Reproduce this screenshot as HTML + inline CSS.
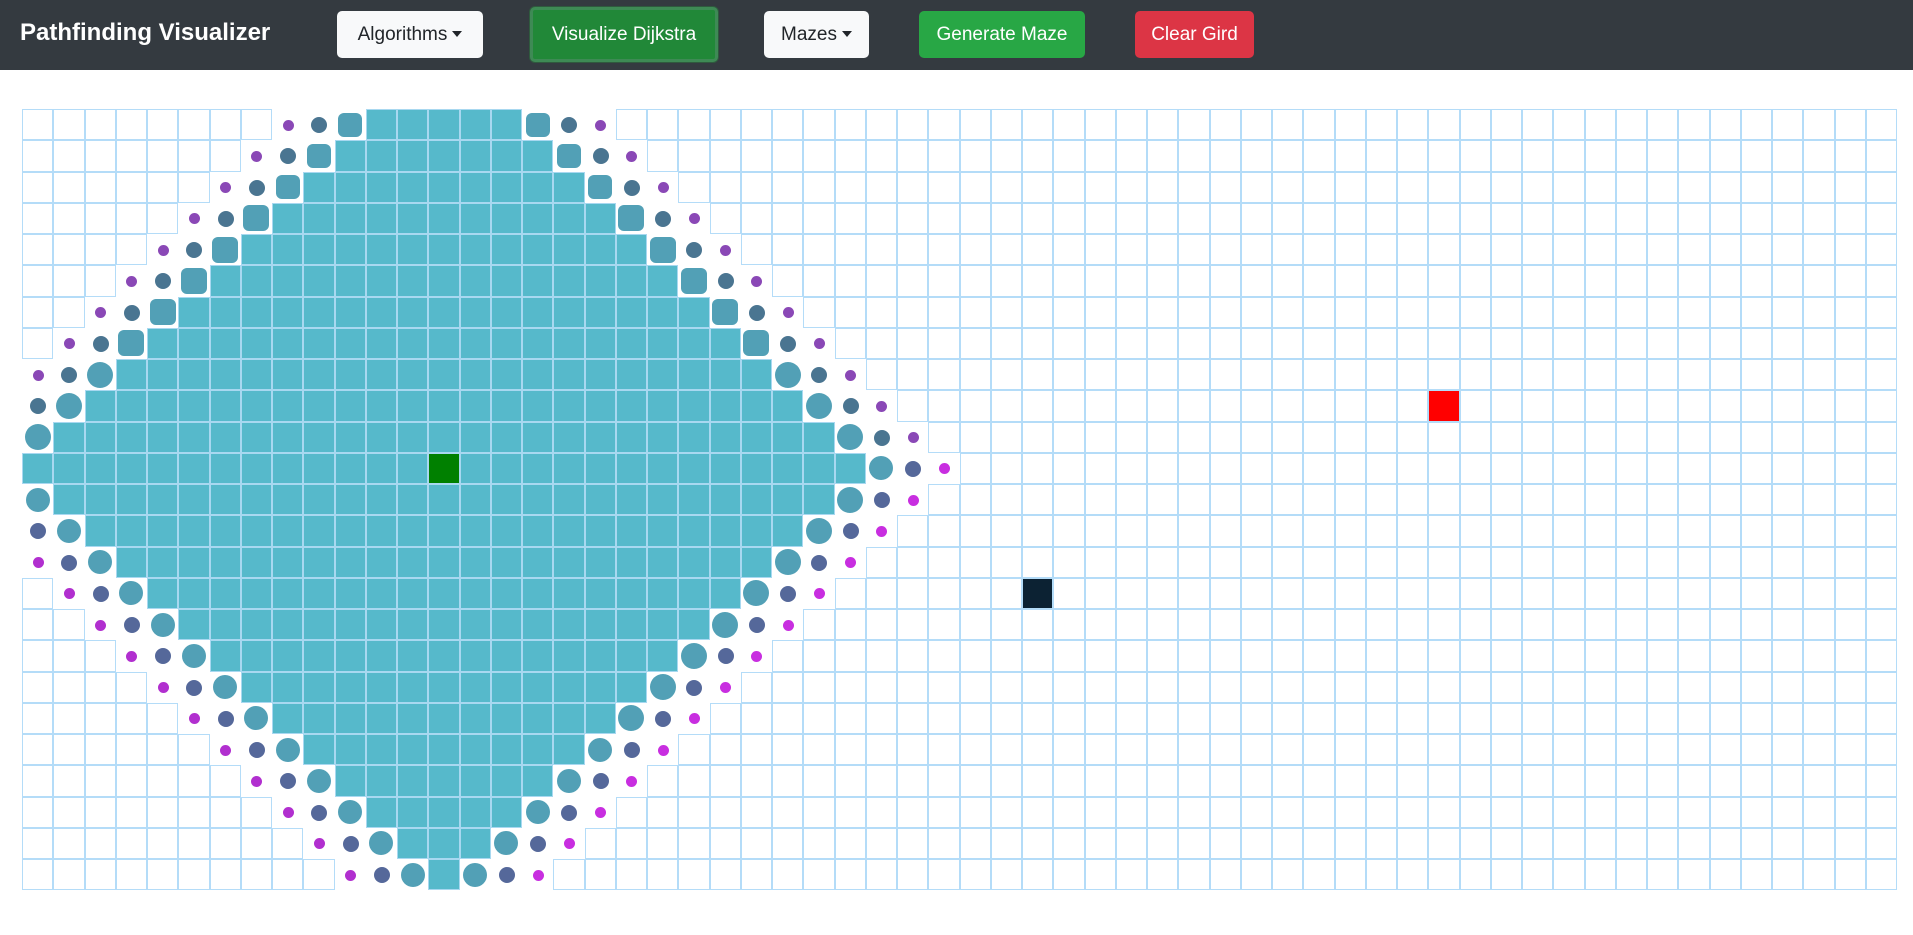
<!DOCTYPE html>
<html><head><meta charset="utf-8"><style>
*{box-sizing:border-box;margin:0;padding:0}
body{width:1913px;height:935px;background:#fff;font-family:"Liberation Sans",sans-serif;overflow:hidden;position:relative}
.nav{position:absolute;left:0;top:0;width:1913px;height:70px;background:#343a40}
.brand{position:absolute;left:20px;top:19px;color:#fff;font-size:24px;font-weight:bold}
.btn{position:absolute;height:47px;border-radius:5px;font-size:19px;line-height:47px;text-align:center}
.light{background:#f8f9fa;color:#212529}
.green{background:#28a745;color:#fff}
.red{background:#dc3545;color:#fff}
.caret{display:inline-block;width:0;height:0;border-left:5px solid transparent;border-right:5px solid transparent;border-top:6px solid #212529;vertical-align:3px;margin-left:5px}
#g{position:absolute;left:22px;top:109px;width:1875px;height:781px}
.c{position:absolute;width:31.25px;height:31.25px;border:1px solid #b4dcf8}
.f{background:#56b9cb;border-color:#a8d8f0}
.s{position:absolute;border-radius:50%}
</style></head><body>
<div class="nav">
<div class="brand">Pathfinding Visualizer</div>
<div class="btn light" style="left:337px;top:11px;width:146px">Algorithms<span class="caret"></span></div>
<div class="btn green" style="left:530px;top:7px;width:188px;height:55px;line-height:49px;background:#218838;border:3px solid #3e8a55;box-shadow:0 0 0 1px #2f5a3e">Visualize Dijkstra</div>
<div class="btn light" style="left:764px;top:11px;width:105px">Mazes<span class="caret"></span></div>
<div class="btn green" style="left:919px;top:11px;width:166px">Generate Maze</div>
<div class="btn red" style="left:1135px;top:11px;width:119px">Clear Gird</div>
</div>
<div id="g"></div>
<script>
var g=document.getElementById('g'),h='',W=31.25;
for(var r=0;r<25;r++)for(var c=0;c<60;c++){
 var d=Math.abs(r-11)+Math.abs(c-13),x=c*W,y=r*W;
 if(r==11&&c==13){h+='<div class="c" style="left:'+x+'px;top:'+y+'px;background:#008000;border-color:#a8d8f0"></div>';continue}
 if(r==9&&c==45){h+='<div class="c" style="left:'+x+'px;top:'+y+'px;background:#f00;border-color:#b4dcf8"></div>';continue}
 if(r==15&&c==32){h+='<div class="c" style="left:'+x+'px;top:'+y+'px;background:#0c2233;border-color:#b4dcf8"></div>';continue}
 if(d<=13){h+='<div class="c f" style="left:'+x+'px;top:'+y+'px"></div>';continue}
 if(d==14){var s=(r==11||Math.abs(r-11)>=9||c<13&&r>11)?24:26;
  h+='<div class="s" style="left:'+(x+(W-s)/2)+'px;top:'+(y+(W-s)/2)+'px;width:'+s+'px;height:'+s+'px;background:#52a0b6;border-radius:'+(r<11&&c>=3&&c<=23?'6px':'50%')+'"></div>';continue}
 if(d==15){h+='<div class="s" style="left:'+(x+8)+'px;top:'+(y+8)+'px;width:16px;height:16px;background:'+(r<11?'#4a7591':'#55689a')+'"></div>';continue}
 if(d==16){var t=r/24,col=r<11?'#8a48b6':(c>13?'#c82ee0':'#b12fcf');
  h+='<div class="s" style="left:'+(x+10.5)+'px;top:'+(y+10.5)+'px;width:11px;height:11px;background:'+col+'"></div>';continue}
 h+='<div class="c" style="left:'+x+'px;top:'+y+'px"></div>';
}
g.innerHTML=h;
</script>
</body></html>
